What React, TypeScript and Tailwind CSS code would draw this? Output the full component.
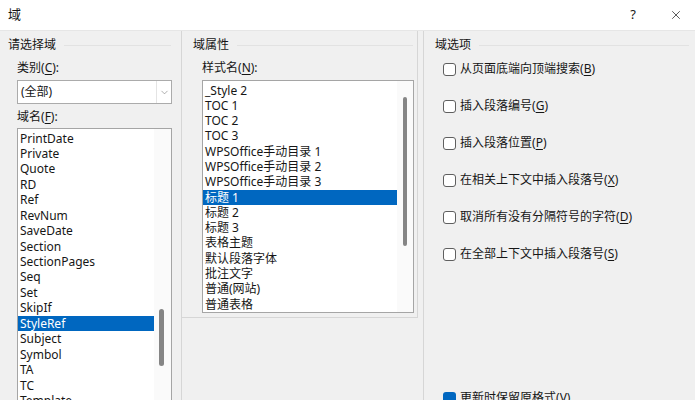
import { X, ChevronDown } from 'lucide-react';

const fieldNames = [
  'PrintDate', 'Private', 'Quote', 'RD', 'Ref', 'RevNum', 'SaveDate', 'Section', 'SectionPages',
  'Seq', 'Set', 'SkipIf', 'StyleRef', 'Subject', 'Symbol', 'TA', 'TC', 'Template',
];

const styleNames = [
  '_Style 2', 'TOC 1', 'TOC 2', 'TOC 3', 'WPSOffice手动目录 1', 'WPSOffice手动目录 2', 'WPSOffice手动目录 3',
  '标题 1', '标题 2', '标题 3', '表格主题', '默认段落字体', '批注文字', '普通(网站)', '普通表格',
];

const options: [string, string][] = [
  ['从页面底端向顶端搜索', 'B'],
  ['插入段落编号', 'G'],
  ['插入段落位置', 'P'],
  ['在相关上下文中插入段落号', 'X'],
  ['取消所有没有分隔符号的字符', 'D'],
  ['在全部上下文中插入段落号', 'S'],
];

function Access({ text, k, colon }: { text: string; k: string; colon?: boolean }) {
  return (
    <span>
      {text}(<span className="underline underline-offset-2">{k}</span>){colon ? ':' : ''}
    </span>
  );
}

function GroupHeader({ title, className }: { title: string; className: string }) {
  return (
    <div className={`flex h-[18px] shrink-0 items-center gap-2 ${className}`}>
      <span className="leading-[18px]">{title}</span>
      <div className="h-px flex-1 bg-[#e2e2e2]" />
    </div>
  );
}

function Checkbox({ checked }: { checked?: boolean }) {
  return checked ? (
    <div className="h-[13px] w-[13px] rounded-[3px] bg-[#0067c0]" />
  ) : (
    <div className="h-[13px] w-[13px] rounded-[3px] border border-[#5f5f5f] bg-white" />
  );
}

export default function App() {
  return (
    <div
      className="flex h-[400px] w-[695px] flex-col overflow-hidden bg-[#f0f0f0] text-[12px] text-[#161616]"
      style={{ fontFamily: '"Noto Sans", "Noto Sans CJK SC", sans-serif' }}
    >
      {/* Title bar */}
      <div className="flex h-[31px] shrink-0 items-center border-b border-[#e6e6e6] bg-white pl-2">
        <span className="text-[13px]">域</span>
        <div className="ml-auto flex items-center">
          <span className="mr-[33px] text-[13px]">?</span>
          <X size={14} strokeWidth={1.2} className="mr-[12px]" />
        </div>
      </div>

      <div className="flex flex-1 items-start">
        {/* Left: 请选择域 */}
        <div className="flex h-[369px] w-[182px] shrink-0 flex-col border-r border-[#d6d6d6] pt-[5px]">
          <GroupHeader title="请选择域" className="pl-2 pr-[10px]" />
          <div className="flex flex-1 flex-col pl-[17px] pr-[9px]">
            <div className="mt-[5px] h-[18px] leading-[18px]">
              <Access text="类别" k="C" colon />
            </div>
            <div className="mt-[3px] flex h-[24px] items-center border border-[#ababab] bg-white">
              <span className="flex-1 pl-[3px]">(全部)</span>
              <div className="flex h-full w-[15px] items-center justify-center border-l border-[#e4e4e4]">
                <ChevronDown size={11} strokeWidth={1.3} className="text-[#7a7a7a]" />
              </div>
            </div>
            <div className="mt-[4px] h-[18px] leading-[18px]">
              <Access text="域名" k="F" colon />
            </div>
            <div className="mt-[2px] flex flex-1 border border-[#a5a5a5] border-b-0 bg-white">
              <div className="flex-1 pt-[1.5px]">
                {fieldNames.map((n) => (
                  <div
                    key={n}
                    className={`h-[15.44px] pl-[2px] leading-[15.44px] ${n === 'StyleRef' ? 'bg-[#0067c0] text-white' : ''}`}
                  >
                    {n}
                  </div>
                ))}
              </div>
              <div className="w-[17px] bg-[#fafafa]">
                <div className="ml-[5px] mt-[180px] h-[57px] w-[5px] rounded-full bg-[#858585]" />
              </div>
            </div>
          </div>
        </div>

        {/* Middle: 域属性 */}
        <div className="flex h-[287px] w-[236px] shrink-0 flex-col border-b border-r border-[#d6d6d6] pt-[5px]">
          <GroupHeader title="域属性" className="pl-[11px] pr-[4px]" />
          <div className="mt-[5px] h-[18px] pl-[20px] leading-[18px]">
            <Access text="样式名" k="N" colon />
          </div>
          <div className="ml-[20px] mr-[3px] mt-[3px] flex h-[233px] border border-[#a5a5a5] bg-white">
            <div className="flex-1 pt-[1.5px]">
              {styleNames.map((n) => (
                <div
                  key={n}
                  className={`h-[15.3px] pl-[2px] leading-[15.3px] ${n === '标题 1' ? 'bg-[#0067c0] text-white' : ''}`}
                >
                  {n}
                </div>
              ))}
            </div>
            <div className="w-[16px] bg-[#fafafa]">
              <div className="ml-[6px] mt-[16px] h-[149px] w-[4px] rounded-full bg-[#858585]" />
            </div>
          </div>
        </div>

        {/* Right: 域选项 */}
        <div className="ml-[5px] flex h-[369px] flex-1 flex-col overflow-hidden border-l border-[#d6d6d6] pt-[5px]">
          <GroupHeader title="域选项" className="pl-[11px] pr-[6px]" />
          {options.map(([t, k], i) => (
            <div
              key={t}
              className={`flex h-[20px] shrink-0 items-center gap-[4px] pl-[19px] ${i === 0 ? 'mt-[5px]' : 'mt-[17px]'}`}
            >
              <Checkbox />
              <Access text={t} k={k} />
            </div>
          ))}
          <div className="mt-[124px] flex h-[20px] shrink-0 items-center gap-[4px] pl-[19px]">
            <Checkbox checked />
            <Access text="更新时保留原格式" k="V" />
          </div>
        </div>
      </div>
    </div>
  );
}
